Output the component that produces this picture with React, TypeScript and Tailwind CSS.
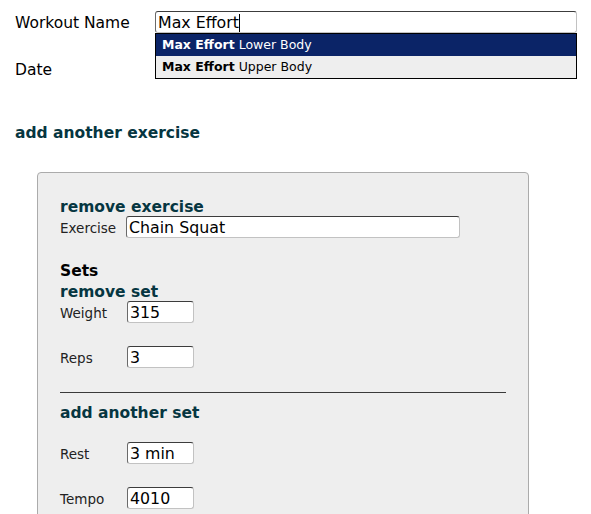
import React from "react";

const font = { fontFamily: '"DejaVu Sans", Verdana, sans-serif' };

function Field({ value, w }: { value: string; w: string }) {
  return (
    <div
      className={`${w} h-[22px] bg-white border border-[#c2c2c2] border-t-[#3c3c3c] border-l-[#6a6a6a] rounded-[3px] pl-[2px] pt-[1px] flex items-center text-[15.8px] text-black leading-none`}
    >
      {value}
    </div>
  );
}

function Row({ label, value, mt }: { label: string; value: string; mt: string }) {
  return (
    <div className={`flex items-center h-[22px] ${mt}`}>
      <div className="w-[67px] text-[13.5px] text-[#222] pt-[2px]">{label}</div>
      <Field value={value} w="w-[67px]" />
    </div>
  );
}

export default function App() {
  return (
    <div className="w-[591px] h-[514px] overflow-hidden bg-white text-black" style={font}>
      <div className="pl-[15px] pt-[11px]">
        <div className="flex items-center h-[22px]">
          <div className="w-[140px] text-[15.5px] pt-[3px]">Workout Name</div>
          <div className="relative">
            <div className="w-[422px] h-[22px] bg-white border border-[#c2c2c2] border-t-[#3c3c3c] border-l-[#6a6a6a] rounded-[3px] pl-[2px] pt-[1px] flex items-center text-[15.8px] leading-none">
              Max Effort
              <span className="inline-block w-px h-[18px] bg-black" />
            </div>
            <div className="absolute left-0 top-[22px] w-[422px] border border-black bg-[#eeeeee] z-10 text-[12.5px]">
              <div className="h-[22px] bg-[#0b2467] text-white pl-[6px] flex items-center">
                <b>Max Effort</b>&nbsp;Lower Body
              </div>
              <div className="h-[22px] text-black pl-[6px] flex items-center">
                <b>Max Effort</b>&nbsp;Upper Body
              </div>
            </div>
          </div>
        </div>
        <div className="mt-[26px] h-[22px] flex items-center text-[15.5px] pt-[2px]">Date</div>
        <div className="mt-[41px] h-[20px] flex items-center text-[15.5px] font-bold text-[#063641] pt-[4px]">
          add another exercise
        </div>
        <div className="mt-[30px] ml-[22px] w-[492px] h-[400px] bg-[#eeeeee] border border-[#ababab] rounded-[4px] pl-[22px] pt-[24px]">
          <div className="h-[18px] flex items-center text-[15.5px] font-bold text-[#063641] pt-[4px]">remove exercise</div>
          <div className="mt-[1px] flex items-center h-[22px]">
            <div className="w-[66px] text-[13.5px] text-[#222] pt-[2px]">Exercise</div>
            <Field value="Chain Squat" w="w-[334px]" />
          </div>
          <div className="mt-[23px] h-[18px] flex items-center text-[15.5px] font-bold pt-[4px]">Sets</div>
          <div className="mt-[3px] h-[18px] flex items-center text-[15.5px] font-bold text-[#063641] pt-[4px]">remove set</div>
          <Row label="Weight" value="315" mt="mt-[1px]" />
          <Row label="Reps" value="3" mt="mt-[23px]" />
          <div className="mt-[24px] w-[446px] h-px bg-[#3a3a3a]" />
          <div className="mt-[10px] h-[18px] flex items-center text-[15.5px] font-bold text-[#063641] pt-[4px]">add another set</div>
          <Row label="Rest" value="3 min" mt="mt-[21px]" />
          <Row label="Tempo" value="4010" mt="mt-[23px]" />
        </div>
      </div>
    </div>
  );
}
